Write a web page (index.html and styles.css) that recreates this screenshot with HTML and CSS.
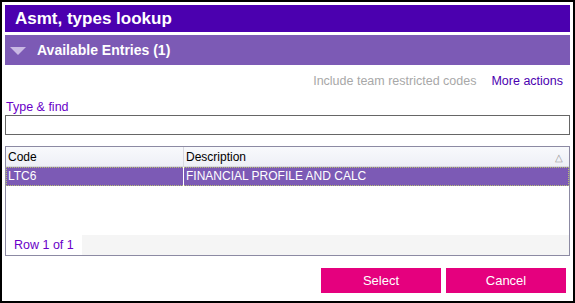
FILE: index.html
```html
<!DOCTYPE html>
<html>
<head>
<meta charset="utf-8">
<link rel="stylesheet" href="styles.css">
</head>
<body>
<div class="dialog">
  <div class="title">Asmt, types lookup</div>
  <div class="section"><span class="tri"></span><span class="section-text">Available Entries (1)</span></div>
  <div class="actions"><span class="muted">Include team restricted codes</span><span class="link">More actions</span></div>
  <label class="label">Type &amp; find</label>
  <div class="input"></div>
  <div class="grid">
    <div class="head">
      <div class="c1">Code</div>
      <div class="c2">Description<span class="sort">&#9651;</span></div>
    </div>
    <div class="row sel">
      <div class="c1">LTC6</div>
      <div class="c2">FINANCIAL PROFILE AND CALC</div>
    </div>
    <div class="spacer"></div>
    <div class="foot"><span class="count">Row 1 of 1</span><span class="fill"></span></div>
  </div>
  <div class="buttons">
    <button class="btn">Select</button>
    <button class="btn">Cancel</button>
  </div>
</div>
</body>
</html>
```
FILE: styles.css
```css
* { box-sizing: border-box; }
html, body { margin: 0; padding: 0; background: #fff; }
body { font-family: "Liberation Sans", Arial, sans-serif; font-size: 12px; }
.dialog {
  width: 575px; height: 303px;
  border: 2px solid #000;
  padding: 3px 3px 0 3px;
  display: flex; flex-direction: column;
}
.title {
  height: 27px; background: #4b00af; color: #fff;
  font-weight: bold; font-size: 17px; line-height: 28px;
  padding-left: 10px;
}
.section {
  margin-top: 3px; height: 30px; background: #7c5ab5; color: #fff;
  display: flex; align-items: center; padding-left: 5px;
}
.tri {
  width: 0; height: 0;
  border-left: 8px solid transparent; border-right: 8px solid transparent;
  border-top: 8px solid #c9b8e4;
  margin-right: 11px; margin-top: 1px;
}
.section-text { font-weight: bold; font-size: 14px; }
.actions {
  height: 31px; display: flex; justify-content: flex-end; align-items: center;
  padding-right: 7px; gap: 15px; font-size: 12.5px;
}
.muted { color: #a8a8a8; }
.link { color: #4b00af; }
.label { color: #6a00c8; font-size: 12.5px; padding-left: 1px; height: 19px; line-height: 22px; display: block; }
.input { height: 20px; border: 1px solid #666; }
.grid {
  margin-top: 11px; height: 110px; border: 1px solid #8c8aa3;
  display: flex; flex-direction: column;
}
.head, .row { display: flex; }
.head {
  height: 20px; line-height: 21px;
  background: linear-gradient(#f8f9fc, #eef0f6);
  border-bottom: 1px solid #d8d8e0; color: #000;
}
.head .c1 { border-right: 1px solid #d8d8e0; }
.c1 { width: 178px; padding-left: 2px; }
.c2 { flex: 1; padding-left: 2px; position: relative; }
.sort { position: absolute; right: 6px; top: 0; color: #999; font-size: 10px; }
.row.sel {
  height: 19px; line-height: 19px; background: #7c5ab5; color: #fff;
  outline: 1px dotted #b6c070; outline-offset: -1px;
}
.row.sel .c1 { border-right: 1px solid #fff; }
.spacer { flex: 1; }
.foot { height: 20px; display: flex; }
.count { width: 76px; color: #6a00c8; padding-left: 8px; line-height: 21px; font-size: 12.5px; }
.fill { flex: 1; background: #f5f5f5; }
.buttons {
  margin-top: 12px; display: flex; justify-content: flex-end; gap: 5px; padding-right: 4px;
}
.btn {
  width: 120px; height: 25px; border: 0; background: #e5007e; color: #fff;
  font-family: "Liberation Sans", Arial, sans-serif; font-size: 13px; padding: 0;
}
```
